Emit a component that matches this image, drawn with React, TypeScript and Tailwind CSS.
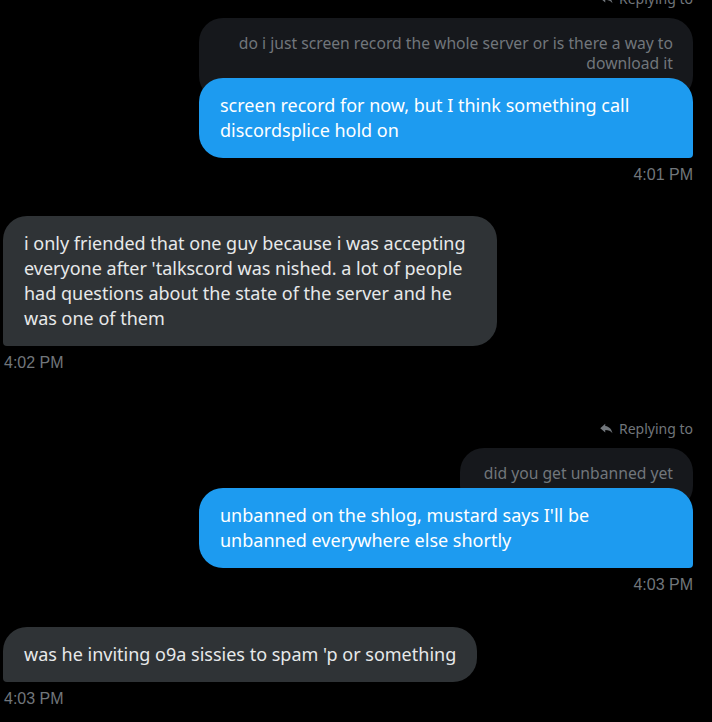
import { type ReactNode } from 'react';

const font = { fontFamily: '"Noto Sans", "Open Sans", sans-serif' };

function ReplyIcon() {
  return (
    <svg viewBox="0 0 24 24" className="w-[15px] h-[15px] fill-current">
      <path d="M10 4.5L2 11.5l8 7v-4.3c5.2 0 8.8 1.6 11.5 5.3-1-5.4-4.3-10.6-11.5-11.5V4.5z" />
    </svg>
  );
}

function Replying({ className = '' }: { className?: string }) {
  return (
    <div className={`flex items-center justify-end gap-[5px] h-[20px] text-[14px] text-[#71767b] ${className}`}>
      <ReplyIcon />
      <span>Replying to</span>
    </div>
  );
}

function Time({ children, right }: { children: ReactNode; right?: boolean }) {
  return (
    <div
      className={`mt-[7px] h-[20px] leading-[20px] text-[16px] text-[#71767b] ${right ? 'text-right' : 'pl-[1px]'}`}
      style={{ fontFamily: '"Liberation Sans", Arial, sans-serif' }}
    >
      {children}
    </div>
  );
}

function Sent({ quote, children }: { quote: ReactNode; children: ReactNode }) {
  return (
    <div className="flex flex-col items-end">
      <div className="max-w-[494px] rounded-[24px] bg-[#16181c] pl-[24px] pr-[20px] pt-[15px] pb-[27px] text-right text-[15.7px] leading-[20px] text-[#71767b]">
        {quote}
      </div>
      <div className="-mt-[22px] w-[494px] rounded-[24px] rounded-br-[4px] bg-[#1d9bf0] px-[21px] py-[15px] text-[18px] leading-[25px] text-white">
        {children}
      </div>
    </div>
  );
}

function Received({ children, width }: { children: ReactNode; width: string }) {
  return (
    <div className={`${width} rounded-[24px] rounded-bl-[4px] bg-[#2f3336] px-[21px] py-[15px] text-[18px] leading-[25px] text-[#e7e9ea]`}>
      {children}
    </div>
  );
}

export default function App() {
  return (
    <div className="min-h-screen bg-black overflow-hidden" style={font}>
      <div className="pl-[3px] pr-[19px]">
        <Replying className="-mt-[12px] mb-[10px]" />
        <Sent quote={<>do i just screen record the whole server or is there a way to download it</>}>
          screen record for now, but I think something call discordsplice hold on
        </Sent>
        <Time right>4:01 PM</Time>

        <div className="mt-[31px]">
          <Received width="w-[494px]">
            i only friended that one guy because i was accepting everyone after 'talkscord was nished. a lot of people had questions about the state of the server and he was one of them
          </Received>
          <Time>4:02 PM</Time>
        </div>

        <Replying className="mt-[45px] mb-[10px]" />
        <Sent quote={<>did you get unbanned yet</>}>
          unbanned on the shlog, mustard says I'll be unbanned everywhere else shortly
        </Sent>
        <Time right>4:03 PM</Time>

        <div className="mt-[32px] flex flex-col items-start">
          <Received width="w-fit">was he inviting o9a sissies to spam 'p or something</Received>
          <Time>4:03 PM</Time>
        </div>
      </div>
    </div>
  );
}
